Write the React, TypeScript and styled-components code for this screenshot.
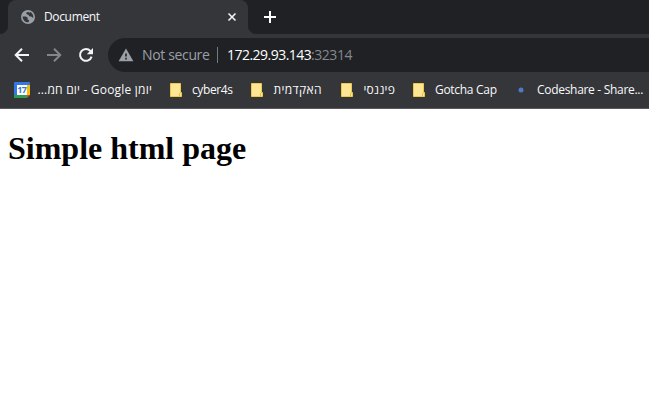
import React from "react";
import styled, { createGlobalStyle } from "styled-components";

const GlobalStyle = createGlobalStyle`
  * { box-sizing: border-box; }
  html, body { margin: 0; background: #fff; overflow: hidden; }
`;

const Window = styled.div`
  width: 649px;
  height: 406px;
  display: flex;
  flex-direction: column;
  background: #fff;
  font-family: "Open Sans", "Noto Sans", "Liberation Sans", sans-serif;
  white-space: nowrap;
`;

const TabStrip = styled.div`
  height: 34px;
  flex: none;
  display: flex;
  background: #202124;
  padding-left: 8px;
`;

const Tab = styled.div`
  position: relative;
  width: 240px;
  height: 34px;
  display: flex;
  align-items: center;
  padding: 0 11px 0 13px;
  border-radius: 8px 8px 0 0;
  background: #35363a;

  &::before,
  &::after {
    content: "";
    position: absolute;
    bottom: 0;
    width: 8px;
    height: 8px;
  }
  &::before {
    left: -8px;
    background: radial-gradient(circle at 0 0, transparent 7.5px, #35363a 8.5px);
  }
  &::after {
    right: -8px;
    background: radial-gradient(circle at 100% 0, transparent 7.5px, #35363a 8.5px);
  }
`;

const Text = styled.span<{ $size: number; $width: number; $spacing: number; $color?: string }>`
  flex: none;
  width: ${(p) => p.$width}px;
  font-size: ${(p) => p.$size}px;
  line-height: 18px;
  letter-spacing: ${(p) => p.$spacing}px;
  color: ${(p) => p.$color ?? "#f8f9fa"};
`;

const Icon = styled.svg`
  display: block;
  flex: none;
`;

const TabTitle = styled(Text)`
  margin-left: 9px;
`;

const CloseIcon = styled(Icon)`
  margin-left: auto;
`;

const NewTabIcon = styled(Icon)`
  margin: 11px 0 0 16px;
`;

const Toolbar = styled.div`
  height: 42px;
  flex: none;
  display: flex;
  align-items: center;
  background: #35363a;
  padding-left: 14px;
`;

const Navigation = styled.div`
  display: flex;
  gap: 16px;
  width: 94px;
`;

const AddressBar = styled.div`
  flex: 1;
  height: 34px;
  display: flex;
  align-items: center;
  padding-left: 10px;
  border-radius: 17px 0 0 17px;
  background: #202124;
`;

const SecurityLabel = styled(Text)`
  margin-left: 8px;
`;

const Divider = styled.div`
  width: 1px;
  height: 16px;
  margin: 0 9px 0 7px;
  background: #76797d;
`;

const Bookmarks = styled.div`
  height: 33px;
  flex: none;
  display: flex;
  align-items: center;
  background: #35363a;
  border-bottom: 1px solid #5b575e;
  padding: 0 0 4px 14px;
`;

const Bookmark = styled.div<{ $gap: number; $after: number }>`
  display: flex;
  align-items: center;
  gap: ${(p) => p.$gap}px;
  margin-right: ${(p) => p.$after}px;
`;

const Page = styled.main`
  flex: 1;
  padding: 21px 8px;
`;

const Heading = styled.h1`
  margin: 0;
  font: bold 32px/37px "Liberation Serif", serif;
  color: #000;
`;

const Globe = () => (
  <Icon width="14" height="14" viewBox="0 0 14 14">
    <circle cx="7" cy="7" r="7" fill="#9aa0a6" />
    <path
      d="M1.6 6.4L4.9 6.5L6.8 7.8L6.4 9.3L8.1 10.2L7.6 12.3C4.3 12.5 1.6 9.8 1.6 6.4zM7.1 1.7L5.2 2.8L5.6 4.3L7.4 4.7L8.2 6.3L10.1 6.5L12.2 8.1C12.8 5.3 11.3 2.6 8.7 1.9L8.6 3.1z"
      fill="#35363a"
    />
  </Icon>
);

const Arrow = ({ forward = false }: { forward?: boolean }) => (
  <Icon width="16" height="16" viewBox="0 0 16 16" fill="none" stroke={forward ? "#85868a" : "#f1f3f4"} strokeWidth="2">
    <path d={forward ? "M1 8H14M8 1.7L14.3 8L8 14.3" : "M15 8H2M8 1.7L1.7 8L8 14.3"} />
  </Icon>
);

const Reload = () => (
  <Icon width="16" height="16" viewBox="0 0 16 16">
    <path d="M12.5 4.1A5.9 5.9 0 1 0 13.6 9.6" fill="none" stroke="#f1f3f4" strokeWidth="2" />
    <path d="M15 1V7.2H8.8z" fill="#f1f3f4" />
  </Icon>
);

const Warning = () => (
  <Icon width="16" height="14" viewBox="0 0 16 14">
    <path d="M8 .5L15.4 13.2H.6z" fill="#9aa0a6" />
    <path d="M7.2 5.5H8.8V8.5H7.2zM7.2 9.8H8.8V11.4H7.2z" fill="#202124" />
  </Icon>
);

const CalendarNumber = styled.text`
  font: bold 9px "Open Sans", sans-serif;
  letter-spacing: -0.5px;
  fill: #3b78cf;
`;

const Calendar = () => (
  <Icon width="16" height="16" viewBox="0 0 16 16">
    <path d="M1 0H15Q16 0 16 1V3H3V16H1Q0 16 0 15V1Q0 0 1 0z" fill="#3478e5" />
    <path d="M13 3H16V13H13z" fill="#fbbc04" />
    <path d="M0 13H13V16H1Q0 16 0 15z" fill="#2e9d50" />
    <path d="M13 13H16L13 16z" fill="#e8453a" />
    <path d="M3 3H13V13H3z" fill="#fff" />
    <CalendarNumber x="7.8" y="11.3" textAnchor="middle">17</CalendarNumber>
  </Icon>
);

const Folder = () => (
  <Icon width="12" height="14" viewBox="0 0 12 14">
    <path d="M.5.5H10.5V9.5H11.5V13.5H.5z" fill="#ffe694" stroke="#edca4c" />
    <path d="M9.5 13V10.5L10.5 9.5" fill="none" stroke="#e5bd3e" />
  </Icon>
);

const Dot = () => (
  <Icon width="16" height="16" viewBox="0 0 16 16">
    <circle cx="8" cy="8" r="2.5" fill="#4f79c4" />
  </Icon>
);

const bookmarks = [
  { label: "יומן Google - יום חמ...", icon: <Calendar />, width: 114, gap: 8, after: 18, spacing: 0.2, rtl: true },
  { label: "cyber4s", icon: <Folder />, width: 41, gap: 10, after: 18, spacing: -0.4 },
  { label: "האקדמית", icon: <Folder />, width: 49, gap: 10, after: 19, spacing: 0.4, rtl: true },
  { label: "פיננסי", icon: <Folder />, width: 32, gap: 10, after: 18, spacing: 0.2, rtl: true },
  { label: "Gotcha Cap", icon: <Folder />, width: 62, gap: 10, after: 16, spacing: -0.3 },
  { label: "Codeshare - Share...", icon: <Dot />, width: 108, gap: 8, after: 0, spacing: -0.3 },
];

export default function App() {
  return (
    <>
      <GlobalStyle />
      <Window>
        <TabStrip>
          <Tab>
            <Globe />
            <TabTitle $size={12} $width={60} $spacing={-0.35}>Document</TabTitle>
            <CloseIcon width="10" height="10" viewBox="0 0 10 10" stroke="#f1f3f4" strokeWidth="1.6">
              <path d="M1.5 1.5L8.5 8.5M8.5 1.5L1.5 8.5" />
            </CloseIcon>
          </Tab>
          <NewTabIcon width="12" height="12" viewBox="0 0 12 12" stroke="#fff" strokeWidth="2">
            <path d="M6 0V12M0 6H12" />
          </NewTabIcon>
        </TabStrip>
        <Toolbar>
          <Navigation>
            <Arrow />
            <Arrow forward />
            <Reload />
          </Navigation>
          <AddressBar>
            <Warning />
            <SecurityLabel $size={14} $width={68} $spacing={-0.35} $color="#9aa0a6">Not secure</SecurityLabel>
            <Divider />
            <Text $size={14} $width={84} $spacing={-0.52} $color="#fff">172.29.93.143</Text>
            <Text $size={14} $width={42} $spacing={-0.45} $color="#85888c">:32314</Text>
          </AddressBar>
        </Toolbar>
        <Bookmarks>
          {bookmarks.map((b) => (
            <Bookmark key={b.label} $gap={b.gap} $after={b.after}>
              {b.icon}
              <Text $size={12} $width={b.width} $spacing={b.spacing} dir={b.rtl ? "rtl" : "ltr"}>{b.label}</Text>
            </Bookmark>
          ))}
        </Bookmarks>
        <Page>
          <Heading>Simple html page</Heading>
        </Page>
      </Window>
    </>
  );
}
